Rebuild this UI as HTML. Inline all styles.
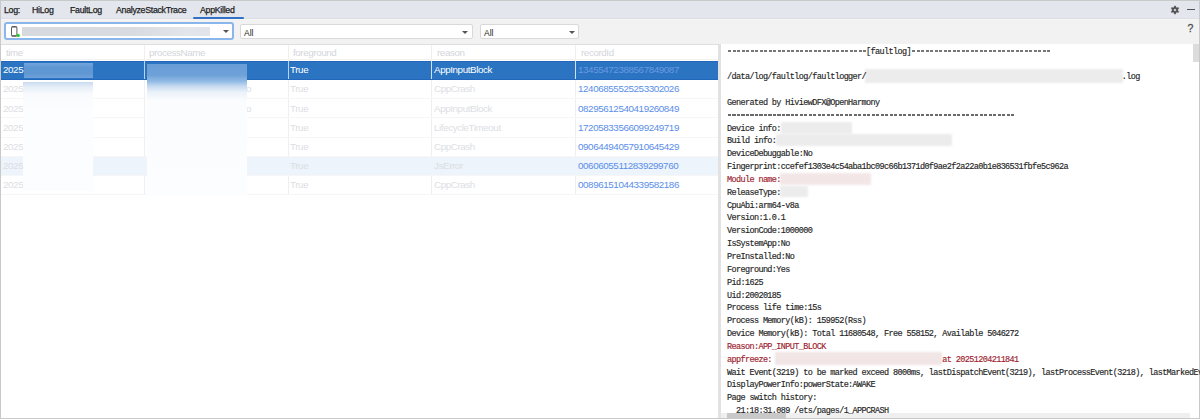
<!DOCTYPE html>
<html><head><meta charset="utf-8">
<style>
*{box-sizing:border-box;margin:0;padding:0}
html,body{width:1200px;height:419px;overflow:hidden;background:#c9c9c9;font-family:"Liberation Sans",sans-serif}
.a{position:absolute}
#tabs{left:1px;top:1px;width:1198px;height:18px;background:#e3e6ed;border-bottom:1px solid #dcdfe6}
.tab{position:absolute;top:5px;font-size:8.8px;letter-spacing:-0.3px;color:#1e1e1e;line-height:10px;white-space:nowrap;-webkit-text-stroke:0.25px #1e1e1e}
#ul{left:192.8px;top:16.7px;width:51px;height:2px;background:#2f72c8;border-radius:1px;z-index:2}
#tool{left:1px;top:19px;width:1198px;height:26px;background:#f2f2f2;border-top:1px solid #f6f4f2;border-bottom:1px solid #dedede}
.combo{position:absolute;background:#fff;border:1px solid #d4d4d4;border-radius:2px}
.arrow{position:absolute;width:0;height:0;border-left:3px solid transparent;border-right:3px solid transparent;border-top:3.5px solid #555}
.ctext{position:absolute;font-size:8.5px;color:#222;line-height:10px}
#table{left:1px;top:45px;width:717px;height:373px;background:#fff}
#split{left:718px;top:45px;width:3px;height:373px;background:#e2e2e2}
#log{left:721px;top:44px;width:478px;height:374px;background:#fff;overflow:hidden}
.hdr{position:absolute;top:47.5px;font-size:9.8px;letter-spacing:-0.4px;color:#d3d6db;line-height:10px}
.row{position:absolute;left:1px;width:717px;height:19px;border-bottom:1px solid #f5f5f5}
.cell{position:absolute;font-size:9.8px;letter-spacing:-0.4px;line-height:10px;color:#dcdee3;white-space:nowrap;margin-top:0.3px}
.vl{position:absolute;top:45px;width:1px;height:150px;background:#efefef}
pre{position:absolute;z-index:1;left:727px;top:45.5px;font-family:"Liberation Mono",monospace;font-size:8.5px;letter-spacing:-0.615px;-webkit-text-stroke:0.16px currentColor;line-height:12.85px;color:#262626}
.r{color:#9e2430}
.bl{position:absolute;background:#ececec;filter:blur(1px)}
</style></head><body>
<div id="tabs" class="a"></div>
<div class="tab" style="left:4px">Log:</div>
<div class="tab" style="left:32px">HiLog</div>
<div class="tab" style="left:70px">FaultLog</div>
<div class="tab" style="left:116px">AnalyzeStackTrace</div>
<div class="tab" style="left:200px">AppKilled</div>
<div id="ul" class="a"></div>
<!-- gear + minimize -->
<svg class="a" style="left:1168.5px;top:3.8px" width="12" height="12" viewBox="0 0 12 12">
<path d="M4.70,3.75 L5.37,2.05 L6.00,1.70 L6.63,2.05 L7.30,3.75 L9.11,3.48 L9.72,3.85 L9.73,4.57 L8.60,6.00 L9.73,7.43 L9.72,8.15 L9.11,8.52 L7.30,8.25 L6.63,9.95 L6.00,10.30 L5.37,9.95 L4.70,8.25 L2.89,8.52 L2.28,8.15 L2.27,7.43 L3.40,6.00 L2.27,4.57 L2.28,3.85 L2.89,3.48Z M6,4.7 A1.3,1.3 0 1,0 6,7.3 A1.3,1.3 0 1,0 6,4.7Z" fill="#505050" fill-rule="evenodd" stroke="#505050" stroke-width="0.3" stroke-linejoin="round"/></svg>
<div class="a" style="left:1187px;top:8.7px;width:8px;height:1.3px;background:#555"></div>

<div id="tool" class="a"></div>
<div class="combo" style="left:4px;top:22.4px;width:230px;height:17.6px;border:2px solid #8ab6eb;border-radius:3px"></div>
<svg class="a" style="left:10px;top:25px" width="11" height="13" viewBox="0 0 11 13">
<rect x="1.5" y="1.6" width="5.4" height="9.5" rx="1.2" fill="none" stroke="#5a5a5a" stroke-width="1"/>
<rect x="1.6" y="1.3" width="5.2" height="1.2" rx="0.6" fill="#5a5a5a"/>
<rect x="1.6" y="10.2" width="5.2" height="1.3" rx="0.6" fill="#5a5a5a"/>
<circle cx="8.2" cy="10.4" r="1.6" fill="#1fd01f"/></svg>
<div class="bl" style="left:22px;top:27px;width:188px;height:9px;background:linear-gradient(90deg,#d6d9dd,#d8dbe0 60%,#e3e6ea 90%,#dfe5ec);filter:blur(0.5px)"></div>
<div class="arrow" style="left:222.5px;top:30px"></div>
<div class="combo" style="left:240px;top:23.6px;width:233px;height:15.4px;border-color:#d9d9d9"></div>
<div class="ctext" style="left:244px;top:27.5px">All</div>
<div class="arrow" style="left:462px;top:30.5px"></div>
<div class="combo" style="left:480px;top:23.6px;width:99px;height:15.4px;border-color:#d9d9d9"></div>
<div class="ctext" style="left:484px;top:27.5px">All</div>
<div class="arrow" style="left:569px;top:30.5px"></div>
<div class="a" style="left:1187.5px;top:22px;font-size:10.5px;color:#505050;line-height:12px;-webkit-text-stroke:0.3px #505050">?</div>

<div id="table" class="a"></div>
<div class="vl" style="left:144px"></div>
<div class="vl" style="left:288px"></div>
<div class="vl" style="left:431px"></div>
<div class="vl" style="left:575px"></div>
<div class="a" style="left:1px;top:59.3px;width:717px;height:1px;background:#f2f1f0"></div>
<div class="hdr" style="left:6px">time</div>
<div class="hdr" style="left:149px">processName</div>
<div class="hdr" style="left:293px">foreground</div>
<div class="hdr" style="left:437px">reason</div>
<div class="hdr" style="left:581px">recordId</div>

<div class="a" style="left:1px;top:60.8px;width:717px;height:18.9px;background:#2a74c2;border-top:1px solid #2267bc;border-bottom:1px solid #2267bc"></div>
<div class="a" style="left:1px;top:80.14px;width:717px;height:19.14px"></div>
<div class="a" style="left:1px;top:98.28px;width:717px;height:1px;background:#f6f6f6"></div>
<div class="a" style="left:1px;top:99.28px;width:717px;height:19.14px"></div>
<div class="a" style="left:1px;top:117.42px;width:717px;height:1px;background:#f6f6f6"></div>
<div class="a" style="left:1px;top:118.42px;width:717px;height:19.14px"></div>
<div class="a" style="left:1px;top:136.56px;width:717px;height:1px;background:#f6f6f6"></div>
<div class="a" style="left:1px;top:137.56px;width:717px;height:19.14px"></div>
<div class="a" style="left:1px;top:155.70px;width:717px;height:1px;background:#f6f6f6"></div>
<div class="a" style="left:1px;top:156.70px;width:717px;height:19.14px;background:#edf4fb"></div>
<div class="a" style="left:1px;top:174.84px;width:717px;height:1px;background:#f6f6f6"></div>
<div class="a" style="left:1px;top:175.84px;width:717px;height:19.14px"></div>
<div class="a" style="left:1px;top:193.98px;width:717px;height:1px;background:#f6f6f6"></div>
<div class="a" style="left:144px;top:61px;width:1px;height:18.2px;background:#bcd3ee"></div>
<div class="a" style="left:288px;top:61px;width:1px;height:18.2px;background:#bcd3ee"></div>
<div class="a" style="left:431px;top:61px;width:1px;height:18.2px;background:#cfdff2"></div>
<div class="a" style="left:575px;top:61px;width:1px;height:18.2px;background:#cfdff2"></div>
<div class="cell" style="left:3px;top:65.00px;color:#fff">2025</div><div class="cell" style="left:290px;top:65.00px;color:#fff">True</div><div class="cell" style="left:434px;top:65.00px;color:#fff">AppInputBlock</div><div class="cell" style="left:578px;top:65.00px;color:#6a9ae0">13455472388567849087</div>
<div class="cell" style="left:3px;top:84.14px">2025</div><div class="cell" style="left:290px;top:84.14px">True</div><div class="cell" style="left:434px;top:84.14px">CppCrash</div><div class="cell" style="left:578px;top:84.14px;color:#5a8eea">12406855525253302026</div>
<div class="cell" style="left:3px;top:103.28px">2025</div><div class="cell" style="left:290px;top:103.28px">True</div><div class="cell" style="left:434px;top:103.28px">AppInputBlock</div><div class="cell" style="left:578px;top:103.28px;color:#5a8eea">08295612540419260849</div>
<div class="cell" style="left:3px;top:122.42px">2025</div><div class="cell" style="left:290px;top:122.42px">True</div><div class="cell" style="left:434px;top:122.42px">LifecycleTimeout</div><div class="cell" style="left:578px;top:122.42px;color:#5a8eea">17205833566099249719</div>
<div class="cell" style="left:3px;top:141.56px">2025</div><div class="cell" style="left:290px;top:141.56px">True</div><div class="cell" style="left:434px;top:141.56px">CppCrash</div><div class="cell" style="left:578px;top:141.56px;color:#5a8eea">09064494057910645429</div>
<div class="cell" style="left:3px;top:160.70px">2025</div><div class="cell" style="left:290px;top:160.70px">True</div><div class="cell" style="left:434px;top:160.70px">JsError</div><div class="cell" style="left:578px;top:160.70px;color:#5a8eea">00606055112839299760</div>
<div class="cell" style="left:3px;top:179.84px">2025</div><div class="cell" style="left:290px;top:179.84px">True</div><div class="cell" style="left:434px;top:179.84px">CppCrash</div><div class="cell" style="left:578px;top:179.84px;color:#5a8eea">00896151044339582186</div>
<div class="cell" style="left:246px;top:84.14px">o</div><div class="cell" style="left:246px;top:103.28px">o</div>

<!-- table blurs -->
<div class="a" style="left:23.5px;top:62.8px;width:69.2px;height:14.8px;background:linear-gradient(180deg,#73a5dc,#5f97d3 30%,#5f97d3 70%,#6fa1d9);filter:blur(0.5px)"></div>
<div class="a" style="left:22.8px;top:81.6px;width:70.6px;height:109px;background:linear-gradient(180deg,#c9dbf0 0,#e6eef8 5px,#f8fafd 12px,#fcfdfe 30px,#fcfdfe 100%);filter:blur(0.6px)"></div>
<div class="a" style="left:147px;top:64px;width:100px;height:132px;background:linear-gradient(180deg,#699dd6 0,#6ea1d8 11px,#8fb8e4 17px,#c4d9f0 22px,#eaf1f9 28px,#fafcfe 36px,#fcfdfe 100%);filter:blur(0.6px)"></div>

<div id="split" class="a"></div>
<div id="log" class="a"></div>
<pre>                               [faultlog]

/data/log/faultlog/faultlogger/                                                         .log

Generated by HiviewDFX@OpenHarmony

Device info:
Build info:
DeviceDebuggable:No
Fingerprint:ccefef1303e4c54aba1bc09c66b1371d0f9ae2f2a22a0b1e836531fbfe5c962a
<span class="r">Module name:</span>
ReleaseType:
CpuAbi:arm64-v8a
Version:1.0.1
VersionCode:1000000
IsSystemApp:No
PreInstalled:No
Foreground:Yes
Pid:1625
Uid:20020185
Process life time:15s
Process Memory(kB): 159952(Rss)
Device Memory(kB): Total 11680548, Free 558152, Available 5046272
<span class="r">Reason:APP_INPUT_BLOCK</span>
<span class="r">appfreeze:                                      at 20251204211841</span>
Wait Event(3219) to be marked exceed 8000ms, lastDispatchEvent(3219), lastProcessEvent(3218), lastMarkedEvent(3218)
DisplayPowerInfo:powerState:AWAKE
Page switch history:
  21:18:31.089 /ets/pages/1_APPCRASH
</pre>
<!-- dash lines -->
<div class="a" style="left:727.5px;top:50.2px;width:139.5px;height:1.7px;background:repeating-linear-gradient(90deg,transparent 0 0.4px,#777 0.4px 3.4px,transparent 3.4px 4.5px)"></div>
<div class="a" style="left:912px;top:50.2px;width:139.5px;height:1.7px;background:repeating-linear-gradient(90deg,transparent 0 0.4px,#777 0.4px 3.4px,transparent 3.4px 4.5px)"></div>
<div class="a" style="left:727px;top:113.8px;width:288px;height:2.5px;background:repeating-linear-gradient(90deg,transparent 0 0.5px,#6a6a6a 0.5px 4px,transparent 4px 4.5px)"></div>
<!-- log blurs -->
<div class="bl" style="left:865px;top:69px;width:258px;height:14px"></div>
<div class="bl" style="left:781px;top:122px;width:71px;height:12px"></div>
<div class="bl" style="left:776px;top:134px;width:176px;height:11.5px"></div>
<div class="bl" style="left:780px;top:173px;width:91px;height:12px;background:#f3e6e7"></div>
<div class="bl" style="left:780px;top:186px;width:28px;height:11px"></div>
<div class="bl" style="left:775px;top:352px;width:167px;height:13px;background:#f1e5e6"></div>

<!-- scrollbars -->
<div class="a" style="left:1193px;top:44px;width:6px;height:18px;background:#dcdcdc"></div>
<div class="a" style="left:721px;top:413px;width:469px;height:5px;background:#efefef;z-index:0"></div>
<div class="a" style="left:727px;top:413px;width:59px;height:5px;background:#c8c8c8;z-index:2"></div>
</body></html>
